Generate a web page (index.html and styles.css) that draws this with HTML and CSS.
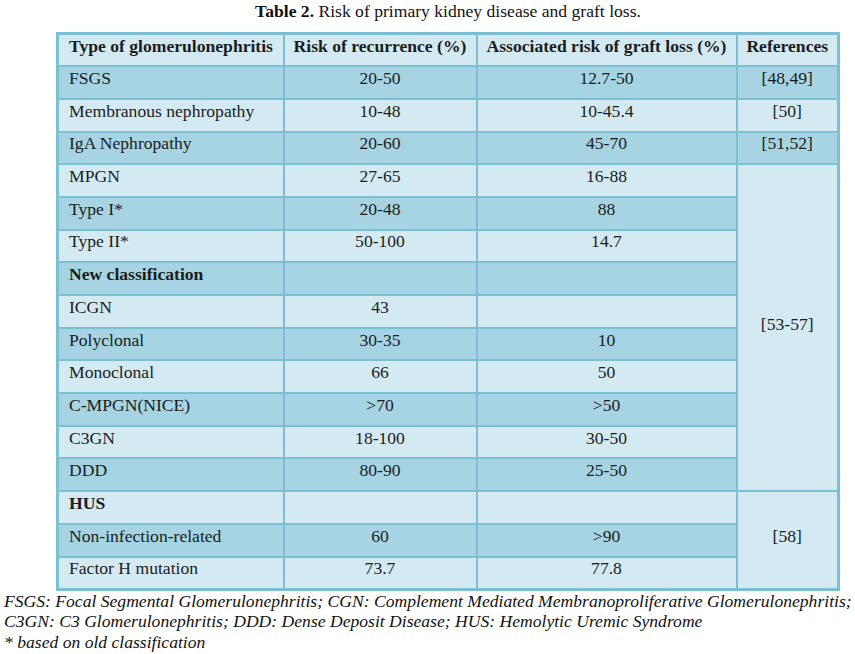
FILE: index.html
```html
<!DOCTYPE html>
<html lang="en">
<head>
<meta charset="utf-8">
<title>Table 2</title>
<link rel="stylesheet" href="styles.css">
</head>
<body class="page">
<table class="risk">
  <caption class="title"><b class="strong">Table 2.</b> Risk of primary kidney disease and graft loss.</caption>
  <colgroup>
    <col class="c1"><col class="c2"><col class="c3"><col class="c4">
  </colgroup>
  <thead>
    <tr class="light">
      <th class="cell left">Type of glomerulonephritis</th>
      <th class="cell">Risk of recurrence (%)</th>
      <th class="cell">Associated risk of graft loss (%)</th>
      <th class="cell">References</th>
    </tr>
  </thead>
  <tbody>
    <tr class="dark"><td class="cell left">FSGS</td><td class="cell">20-50</td><td class="cell">12.7-50</td><td class="cell">[48,49]</td></tr>
    <tr class="light"><td class="cell left">Membranous nephropathy</td><td class="cell">10-48</td><td class="cell">10-45.4</td><td class="cell">[50]</td></tr>
    <tr class="dark"><td class="cell left">IgA Nephropathy</td><td class="cell">20-60</td><td class="cell">45-70</td><td class="cell">[51,52]</td></tr>
    <tr class="light"><td class="cell left">MPGN</td><td class="cell">27-65</td><td class="cell">16-88</td><td class="cell span" rowspan="10">[53-57]</td></tr>
    <tr class="dark"><td class="cell left">Type I*</td><td class="cell">20-48</td><td class="cell">88</td></tr>
    <tr class="light"><td class="cell left">Type II*</td><td class="cell">50-100</td><td class="cell">14.7</td></tr>
    <tr class="dark"><td class="cell left bold">New classification</td><td class="cell"></td><td class="cell"></td></tr>
    <tr class="light"><td class="cell left">ICGN</td><td class="cell">43</td><td class="cell"></td></tr>
    <tr class="dark"><td class="cell left">Polyclonal</td><td class="cell">30-35</td><td class="cell">10</td></tr>
    <tr class="light"><td class="cell left">Monoclonal</td><td class="cell">66</td><td class="cell">50</td></tr>
    <tr class="dark"><td class="cell left">C-MPGN(NICE)</td><td class="cell">&gt;70</td><td class="cell">&gt;50</td></tr>
    <tr class="light"><td class="cell left">C3GN</td><td class="cell">18-100</td><td class="cell">30-50</td></tr>
    <tr class="dark"><td class="cell left">DDD</td><td class="cell">80-90</td><td class="cell">25-50</td></tr>
    <tr class="light"><td class="cell left bold">HUS</td><td class="cell"></td><td class="cell"></td><td class="cell span" rowspan="3">[58]</td></tr>
    <tr class="dark"><td class="cell left">Non-infection-related</td><td class="cell">60</td><td class="cell">&gt;90</td></tr>
    <tr class="light"><td class="cell left">Factor H mutation</td><td class="cell">73.7</td><td class="cell">77.8</td></tr>
  </tbody>
</table>
<p class="notes">FSGS: Focal Segmental Glomerulonephritis; CGN: Complement Mediated Membranoproliferative Glomerulonephritis;<br>C3GN: C3 Glomerulonephritis; DDD: Dense Deposit Disease; HUS: Hemolytic Uremic Syndrome<br>* based on old classification</p>
</body>
</html>
```

FILE: styles.css
```css
html {
  margin: 0;
  padding: 0;
  background: #ffffff;
}

.page {
  margin: 0;
  padding: 0 0 0 4px;
  font-family: "Liberation Serif";
  font-size: 17.6px;
  line-height: 20px;
  color: #1c1c1c;
  background: #ffffff;
}

.risk {
  margin-left: 52px;
  width: 784px;
  table-layout: fixed;
  border-collapse: collapse;
  border: 3px solid #7cbfd4;
  font-family: "Liberation Serif";
  font-size: 17.6px;
}

.title {
  caption-side: top;
  text-align: center;
  padding: 1px 0 11px;
  line-height: 20px;
  color: #111111;
  font-family: "Liberation Serif";
  font-size: 17.6px;
  white-space: nowrap;
}

.strong {
  font-weight: bold;
  font-family: "Liberation Serif";
}

.c1 { width: 226px; }
.c2 { width: 193px; }
.c3 { width: 260px; }
.c4 { width: 102px; }

.risk tr {
  height: 32.7px;
}

.cell {
  border: 2px solid #7cbfd4;
  padding: 0 2px 9px;
  text-align: center;
  vertical-align: middle;
  font-family: "Liberation Serif";
  font-size: 17.6px;
  line-height: 20px;
  font-weight: normal;
  color: #1c1c1c;
  white-space: nowrap;
}

th.cell {
  font-weight: bold;
}

.cell.left {
  text-align: left;
  padding-left: 10px;
}

.cell.bold {
  font-weight: bold;
}

.light .cell {
  background: #d3eaf2;
}

.dark .cell {
  background: #a6d4e2;
}

.cell.span {
  background: #d3eaf2;
  padding: 0 0 7px;
}

.notes {
  margin: 0;
  font-family: "Liberation Serif";
  font-size: 17.6px;
  font-style: italic;
  white-space: nowrap;
  line-height: 20.5px;
  color: #111111;
}
```
